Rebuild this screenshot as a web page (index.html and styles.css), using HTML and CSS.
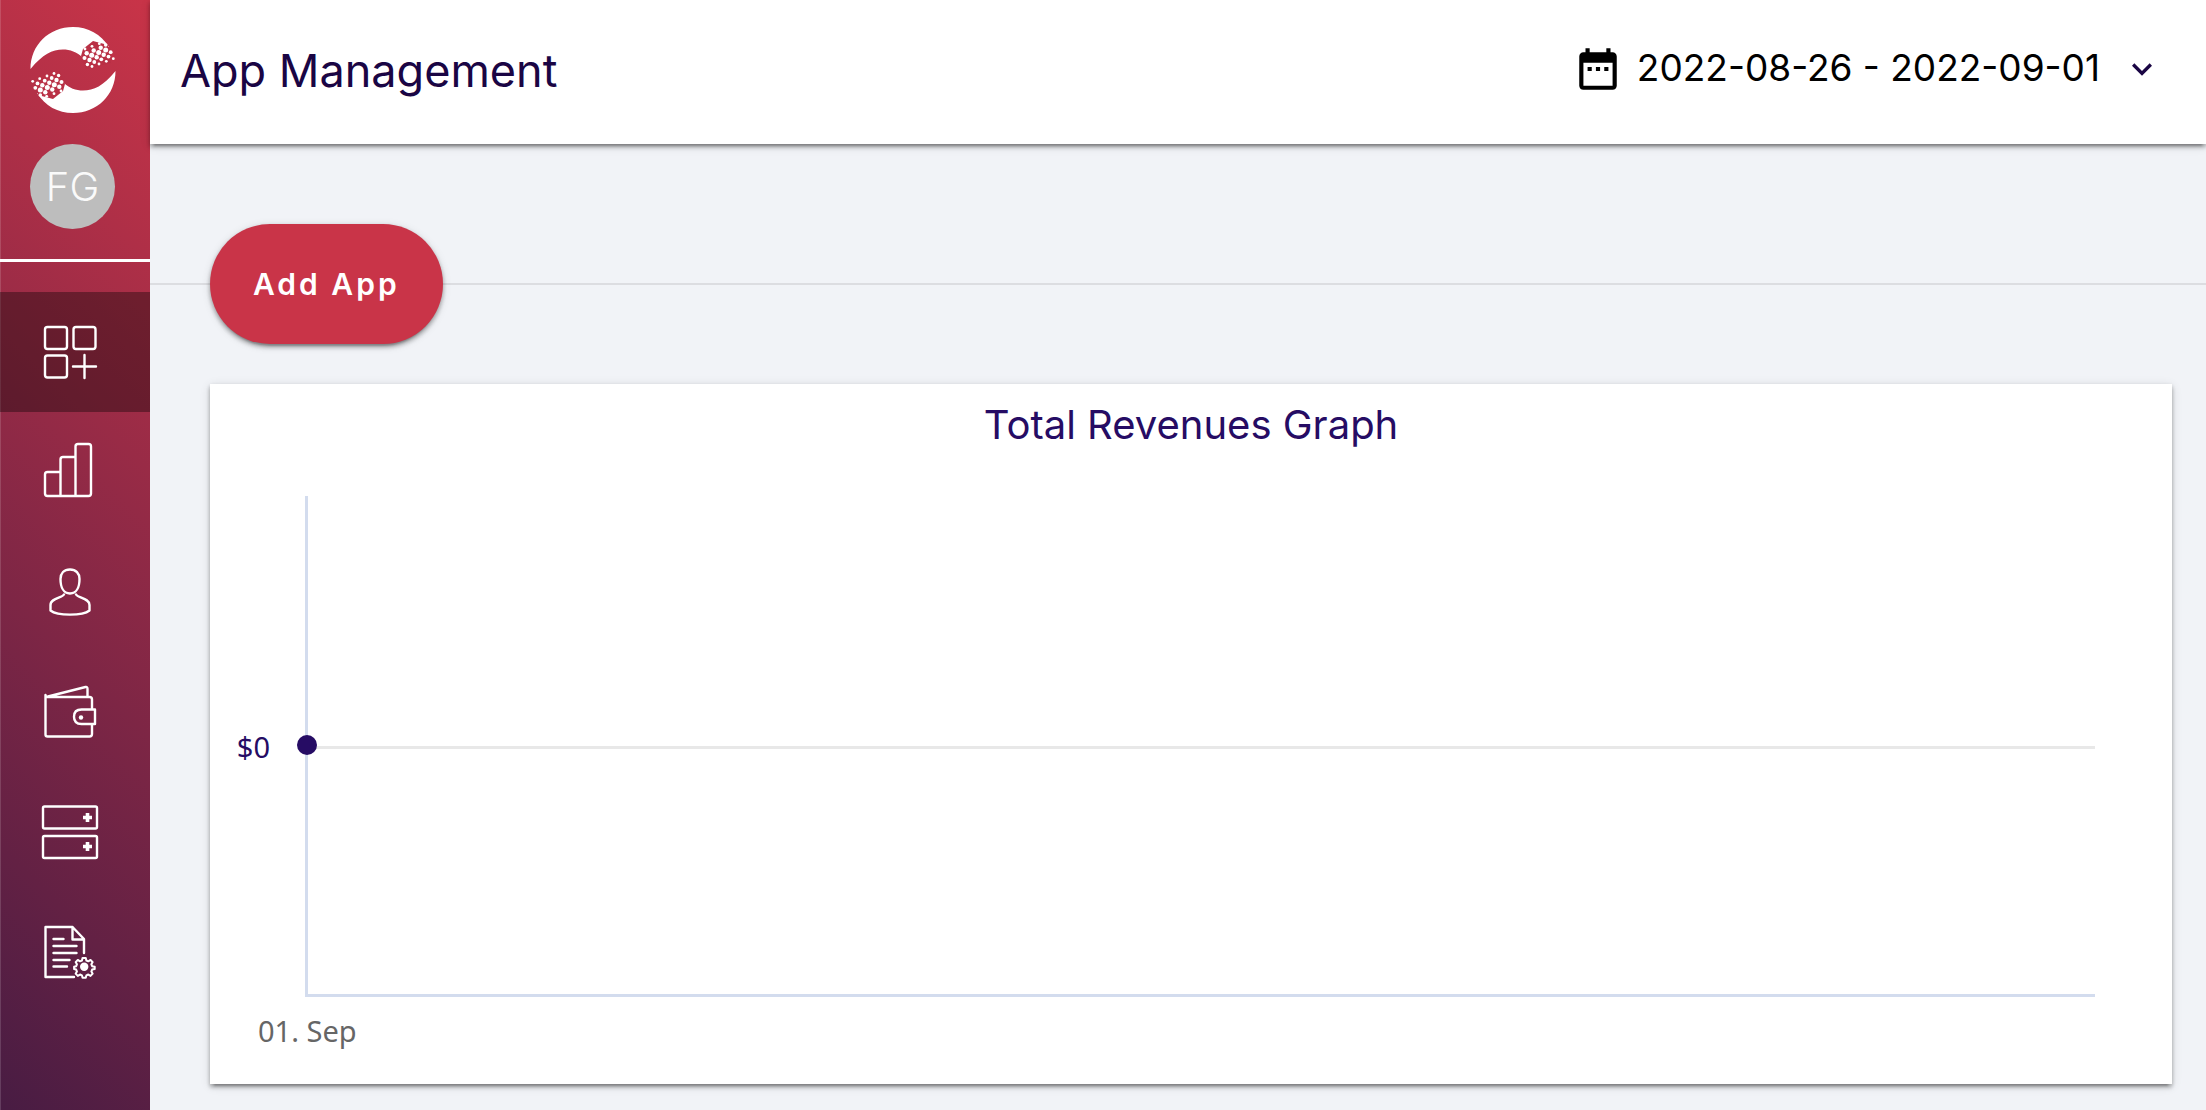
FILE: index.html
```html
<!DOCTYPE html>
<html lang="en">
<head>
<meta charset="utf-8">
<meta name="viewport" content="width=device-width, initial-scale=1">
<title>App Management</title>
<link rel="stylesheet" href="styles.css">
</head>
<body>
<div class="app">
  <aside class="sidebar">
    <a class="logo" href="#" aria-label="Home">
      <svg viewBox="0 0 86 86" aria-hidden="true">
        <defs>
          <g id="swoosh">
            <path d="M85.500 44C73 59 64 63.500 53 63.500C46 63.500 39 61 34 56L32 61L22 67L7 66C15 79 28 86 43 86C67 86 85.500 68 85.500 44Z"/>
            <path class="logo-gap" d="M5 50L30 44L35 57L33 64L23 72L8 68Z"/>
            <circle cx="2.700" cy="54.300" r="1.400"/><circle cx="9.700" cy="51.700" r="1.400"/><circle cx="17" cy="49" r="1.400"/><circle cx="24" cy="46.500" r="1.400"/>
            <circle cx="28.600" cy="48.500" r="1.700"/><circle cx="7.500" cy="56.400" r="1.900"/><circle cx="14.700" cy="53.700" r="1.900"/><circle cx="21.700" cy="51" r="1.900"/>
            <circle cx="5.300" cy="60.800" r="1.900"/><circle cx="12.300" cy="58.300" r="2.200"/><circle cx="19.300" cy="55.700" r="2.200"/><circle cx="26.500" cy="53" r="2.200"/><circle cx="31.500" cy="55" r="2"/>
            <circle cx="10.300" cy="63" r="2.500"/><circle cx="17.300" cy="60.400" r="2.500"/><circle cx="24.300" cy="57.800" r="2.500"/>
            <circle cx="15.300" cy="65.300" r="2.200"/><circle cx="22.300" cy="62.500" r="2.200"/><circle cx="29.300" cy="59.700" r="2.200"/>
            <circle cx="16.700" cy="69.300" r="1.400"/><circle cx="24" cy="66.700" r="1.400"/><circle cx="31" cy="64" r="1.400"/>
            <circle cx="10.300" cy="68" r="1.800"/>
          </g>
        </defs>
        <use href="#swoosh"/>
        <use href="#swoosh" transform="rotate(180 43 43)"/>
      </svg>
    </a>
    <button class="avatar" type="button" aria-label="Account FG">FG</button>
    <nav class="nav" aria-label="Main">
      <a class="nav-item is-active" href="#" aria-label="App management" aria-current="page">
        <svg viewBox="0 0 60 60" aria-hidden="true"><rect x="5" y="5" width="22" height="22" rx="2.500"/><rect x="33.500" y="5" width="22" height="22" rx="2.500"/><rect x="5" y="33.500" width="22" height="22" rx="2.500"/><path d="M44.500 33v23M33 44.500h23"/></svg>
      </a>
      <a class="nav-item" href="#" aria-label="Statistics">
        <svg viewBox="0 0 60 60" aria-hidden="true"><path d="M20 30H7.500Q5 30 5 32.500V51.500Q5 54 7.500 54H48.500Q51 54 51 51.500V4.500Q51 2 48.500 2H38Q35.500 2 35.500 4.500V54M35.500 15H23Q20.500 15 20.500 17.500V54"/></svg>
      </a>
      <a class="nav-item" href="#" aria-label="Profile">
        <svg viewBox="0 0 60 60" aria-hidden="true"><path d="M30 7.500c-6 0-9.500 4-9.500 9.500c0 8 3 14.500 9.500 14.500s9.500-6.500 9.500-14.500c0-5.500-3.500-9.500-9.500-9.500zM24 32.500C22 36 10.500 36 10.500 43v5.500c7 5.500 32 5.500 39 0V43c0-7-11.500-7-13.500-10.500"/></svg>
      </a>
      <a class="nav-item" href="#" aria-label="Wallet">
        <svg viewBox="0 0 60 60" aria-hidden="true"><path d="M52 27V17.500Q52 15 49.500 15H7.500Q5.500 15 5.500 13V52.500Q5.500 54.500 7.500 54.500H49.500Q52 54.500 52 52V42M8 14.500L45.500 5Q47.500 4.500 47.500 7V15M55 27.500H41.500Q34 27.500 34 34.700T41.500 42H55Z"/><circle class="solid" cx="41" cy="35.500" r="2.200"/></svg>
      </a>
      <a class="nav-item" href="#" aria-label="Placements">
        <svg viewBox="0 0 60 60" aria-hidden="true"><rect x="3" y="4.500" width="54" height="22" rx="1.500"/><rect x="3" y="34" width="54" height="22" rx="1.500"/><path class="plus" d="M47.500 11v9M43 15.500h9M47.500 40v9M43 44.500h9"/></svg>
      </a>
      <a class="nav-item" href="#" aria-label="Report settings">
        <svg viewBox="0 0 60 60" aria-hidden="true"><path d="M34 55H5.500V5H32.500L44 17V31M32.500 5V17.500H44M13.500 17H23.500M13.500 24H36.500M13.500 31H36.500M13.500 38H29.500M13.500 44.500H27"/><path transform="translate(6.500 6.700) scale(.85)" d="M42.400 34.500h3.800l.7 2.900l2.300 1l2.600-1.600l2.500 2.500l-1.500 2.600l.9 2.200l3 .7v2.600l-3 .7l-.9 2.300l1.500 2.500l-2.500 2.600l-2.600-1.600l-2.300 1l-.7 2.900h-3.800l-.7-2.900l-2.300-1l-2.600 1.600l-2.500-2.600l1.500-2.500l-.9-2.300l-2.400-.7v-2.600l2.400-.7l.9-2.200l-1.500-2.600l2.500-2.500l2.600 1.600l2.300-1z"/><circle class="solid" cx="44.200" cy="44.800" r="4.200"/></svg>
      </a>
    </nav>
  </aside>
  <div class="page">
    <header class="topbar">
      <h1 class="title">App Management</h1>
      <button class="date-range" type="button">
        <svg class="calendar" viewBox="0 0 24 24" aria-hidden="true"><path d="M9 11H7v2h2v-2zm4 0h-2v2h2v-2zm4 0h-2v2h2v-2zm2-7h-1V2h-2v2H8V2H6v2H5c-1.110 0-1.990.9-1.990 2L3 20c0 1.100.89 2 2 2h14c1.100 0 2-.9 2-2V6c0-1.100-.9-2-2-2zm0 16H5V9h14v11z"/></svg>
        <span class="dates">2022-08-26 - 2022-09-01</span>
        <svg class="chevron" viewBox="0 0 24 24" aria-hidden="true"><path d="M16.590 8.590L12 13.170L7.410 8.590L6 10l6 6l6-6z"/></svg>
      </button>
    </header>
    <main class="content">
      <div class="actions">
        <button class="add-app" type="button">Add App</button>
      </div>
      <section class="card" aria-labelledby="graph-title">
        <h2 class="card-title" id="graph-title">Total Revenues Graph</h2>
        <div class="chart">
          <span class="y-label">$0</span>
          <div class="plot"><div class="gridline"><span class="point"></span></div></div>
          <span class="x-label">01. Sep</span>
        </div>
      </section>
    </main>
  </div>
</div>
</body>
</html>
```
FILE: styles.css
```css
* { box-sizing: border-box; }

:root {
  --red: #c93448;
  --navy: #260c64;
  --raised: 0 6px 2px -4px rgba(0, 0, 0, .2), 0 4px 4px rgba(0, 0, 0, .14), 0 2px 10px rgba(0, 0, 0, .12), 0 2px 4px rgba(0, 0, 0, .2);
}

body {
  margin: 0;
  background: #f1f3f7;
  font-family: Inter, "Liberation Sans", sans-serif;
}

button { border: 0; font-family: inherit; cursor: pointer; }

.app { display: flex; min-height: 100vh; }

/* Sidebar */
.sidebar {
  display: flex;
  flex-direction: column;
  flex: none;
  width: 150px;
  background: linear-gradient(225deg, #c93448, #481c43);
  box-shadow: inset 1px 0 rgba(255, 255, 255, .15);
}

.logo { margin: 27px 0 0 30px; height: 86px; }
.logo svg { display: block; width: 86px; height: 86px; fill: #fff; }
.logo-gap { fill: #b93045; }

.avatar {
  width: 85px;
  height: 85px;
  margin: 31px 0 30px 30px;
  padding: 0;
  border-radius: 50%;
  background: #bdbdbd;
  color: #fafafa;
  font-size: 40px;
  font-weight: 300;
}

.nav { border-top: 3px solid #fff; padding-top: 30px; }

.nav-item {
  display: flex;
  align-items: center;
  height: 120px;
  padding-left: 40px;
}
.nav-item.is-active { background: rgba(0, 0, 0, .35); }

.nav-item svg {
  width: 60px;
  height: 60px;
  fill: none;
  stroke: #fff;
  stroke-width: 2.4;
  stroke-linecap: round;
  stroke-linejoin: round;
}
.nav-item .solid { fill: #fff; stroke: none; }
.nav-item .plus { stroke-width: 3.6; stroke-linecap: butt; }

/* Header */
.page { display: flex; flex: 1; flex-direction: column; min-width: 0; }

.topbar {
  display: flex;
  align-items: center;
  justify-content: space-between;
  height: 144px;
  padding: 0 44px 4px 30px;
  background: #fff;
  box-shadow: var(--raised);
}

.title {
  margin: 0;
  color: #1a0544;
  font-size: 45px;
  font-weight: 400;
}

.date-range {
  display: flex;
  align-items: center;
  padding: 0 0 2px;
  background: none;
  color: #000;
  font-size: 37px;
}
.calendar { width: 50px; height: 50px; margin-right: 14px; }
.dates { padding-bottom: 4px; }
.chevron { width: 40px; height: 40px; margin-left: 22px; fill: #1a0544; }

/* Content */
.content {
  display: flex;
  flex: 1;
  flex-direction: column;
  padding: 80px 0 26px;
}

.actions {
  padding-left: 60px;
  background: linear-gradient(#dcdde1, #dcdde1) 0 50% / 100% 2px no-repeat;
}

.add-app {
  height: 120px;
  padding: 0 43px;
  border-radius: 60px;
  background: var(--red);
  box-shadow: var(--raised);
  color: #fff;
  font-size: 30px;
  font-weight: 600;
  letter-spacing: 3px;
}

.card {
  display: flex;
  flex: 1;
  flex-direction: column;
  margin: 40px 34px 0 60px;
  background: #fff;
  box-shadow: var(--raised);
}

.card-title {
  margin: 0;
  padding-top: 17px;
  color: var(--navy);
  font-size: 40px;
  font-weight: 400;
  line-height: 48px;
  text-align: center;
}

/* Chart */
.chart {
  display: grid;
  flex: 1;
  grid-template: minmax(300px, 1fr) 87px / 95px 1fr;
  padding: 47px 77px 0 0;
  font: 29px/40px "Noto Sans", sans-serif;
}

.y-label {
  align-self: center;
  padding-right: 35px;
  color: var(--navy);
  text-align: right;
}

.plot {
  display: flex;
  flex-direction: column;
  justify-content: center;
  padding-top: 5px;
  border: solid #d3dcee;
  border-width: 0 0 3px 3px;
}

.gridline { position: relative; border-top: 3px solid #e8e8e8; }

.point {
  position: absolute;
  top: -14px;
  left: -11px;
  width: 20px;
  height: 20px;
  border-radius: 50%;
  background: var(--navy);
}

.x-label {
  grid-column: 1 / -1;
  padding: 14px 0 0 48px;
  color: #666;
}
```
